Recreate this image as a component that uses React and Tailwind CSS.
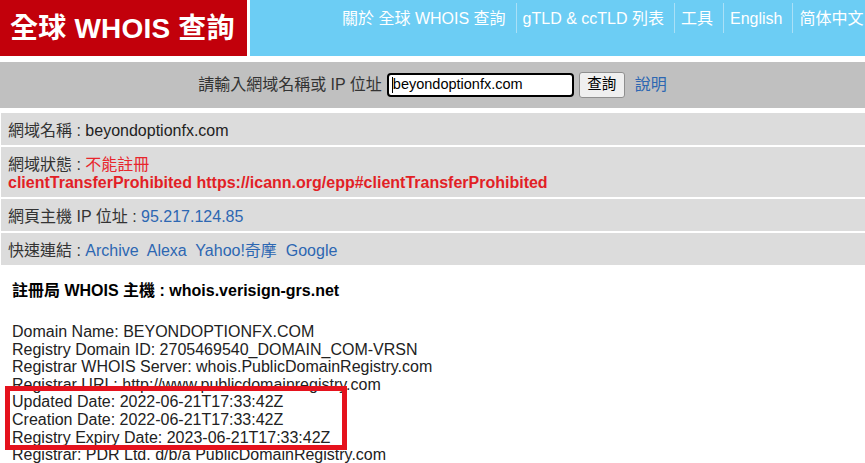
export default function App() {
  const font = { fontFamily: '"Liberation Sans", Arial, "Noto Sans CJK TC", sans-serif' };
  const nav = ['關於 全球 WHOIS 查詢', 'gTLD & ccTLD 列表', '工具', 'English', '简体中文'];
  const whois = [
    'Domain Name: BEYONDOPTIONFX.COM',
    'Registry Domain ID: 2705469540_DOMAIN_COM-VRSN',
    'Registrar WHOIS Server: whois.PublicDomainRegistry.com',
    'Registrar URL: http://www.publicdomainregistry.com',
    'Updated Date: 2022-06-21T17:33:42Z',
    'Creation Date: 2022-06-21T17:33:42Z',
    'Registry Expiry Date: 2023-06-21T17:33:42Z',
    'Registrar: PDR Ltd. d/b/a PublicDomainRegistry.com',
  ];

  return (
    <div className="w-[865px] h-[463px] overflow-hidden bg-white text-[16px] text-[#333]" style={font}>
      {/* header */}
      <div className="flex h-[56px] gap-[3px]">
        <div className="w-[247px] shrink-0 bg-[#c2000b] text-white font-bold text-[28px] pl-[10px] pt-[1px] flex items-center tracking-[0.2px]">
          全球 WHOIS 查詢
        </div>
        <div className="flex-1 bg-[#6ccdf4] flex items-start pl-[92px] pt-[3px] overflow-hidden whitespace-nowrap">
          {nav.map((item, i) => (
            <div
              key={item}
              className={`h-[30px] flex items-center text-white leading-[18px] pt-[2px] ${i === 0 ? 'pr-[10px]' : 'pl-[6px] pr-[10px] border-l border-[#a9e0f7]'}`}
            >
              {item}
            </div>
          ))}
        </div>
      </div>

      {/* search */}
      <div className="mt-[6px] h-[46px] bg-[#c0c0c0] flex items-center justify-center">
        <span className="text-[#333]">請輸入網域名稱或 IP 位址</span>
        <div className="ml-[5px] w-[187px] h-[24px] border-2 border-black rounded-[4px] bg-white flex items-center pl-[3px] text-[14.5px] text-black">
          <span className="w-px h-[16px] bg-black" />
          beyondoptionfx.com
        </div>
        <button className="ml-[5px] w-[46px] h-[26px] border border-[#8f8f8f] rounded-[3px] bg-[#efefef] text-[14.5px] text-black">
          查詢
        </button>
        <a className="ml-[10px] text-[#2d67b2]">說明</a>
      </div>

      {/* info rows */}
      <div className="mt-[5px] flex flex-col gap-[2px] pl-[1px] leading-[18px]">
        <div className="bg-[#dcdcdc] pl-[7px] pt-[9px] pb-[5px]">
          網域名稱 : <span className="text-[#222]">beyondoptionfx.com</span>
        </div>
        <div className="bg-[#dcdcdc] pl-[7px] pt-[9px] pb-[5px]">
          <div>
            網域狀態 : <span className="text-[#e8262c]">不能註冊</span>
          </div>
          <div className="font-bold text-[#e21f26]">
            clientTransferProhibited https://icann.org/epp#clientTransferProhibited
          </div>
        </div>
        <div className="bg-[#dcdcdc] pl-[7px] pt-[9px] pb-[5px]">
          網頁主機 IP 位址 : <span className="text-[#2d67b2]">95.217.124.85</span>
        </div>
        <div className="bg-[#dcdcdc] pl-[7px] pt-[9px] pb-[5px]">
          快速連結 :{' '}
          <span className="text-[#2d67b2]">
            Archive&nbsp; Alexa&nbsp; Yahoo!奇摩&nbsp; Google
          </span>
        </div>
      </div>

      {/* whois */}
      <div className="relative pl-[12px] pt-[17px] text-[#222]">
        <div className="font-bold leading-[18px] text-black">註冊局 WHOIS 主機 : whois.verisign-grs.net</div>
        <div className="mt-[23px] leading-[17.6px]">
          {whois.map((line) => (
            <div key={line}>{line}</div>
          ))}
        </div>
        <div className="absolute left-[5px] top-[121px] w-[342px] h-[64px] border-[5px] border-[#e5121d]" />
      </div>
    </div>
  );
}
